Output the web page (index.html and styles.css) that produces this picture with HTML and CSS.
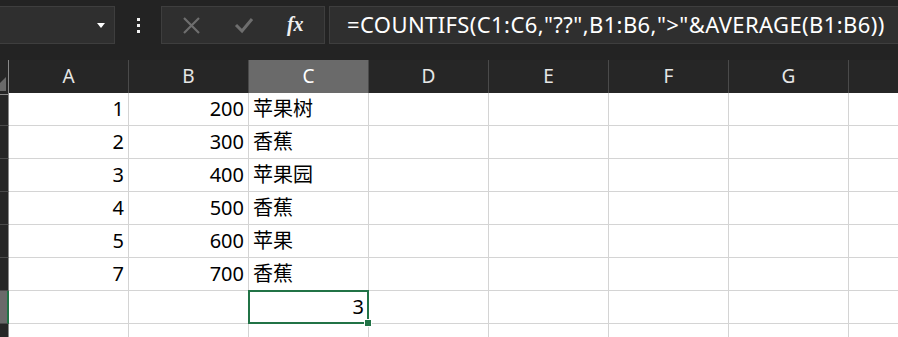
FILE: index.html
```html
<!DOCTYPE html>
<html lang="zh-CN">
<head>
  <meta charset="UTF-8">
  <title>COUNTIFS</title>
  <link rel="stylesheet" href="styles.css">
</head>
<body>
  <!-- Formula bar -->
  <div class="formulaBar">
    <div class="nameBox">
      <svg class="dropArrow" width="8" height="5" viewBox="0 0 8 5"><path d="M0 0H8L4 5Z" fill="#fff"/></svg>
    </div>
    <div class="dots"><i></i><i></i><i></i></div>
    <div class="fxBox">
      <svg class="fxIcon" width="19" height="19" viewBox="0 0 19 19"><path d="M2 2L17 17M17 2L2 17" stroke="#6e6e6e" stroke-width="2.2" fill="none"/></svg>
      <svg class="fxIcon" width="20" height="18" viewBox="0 0 20 18"><path d="M2 9L8 15L18 3" stroke="#6e6e6e" stroke-width="3" fill="none"/></svg>
      <span class="fxLabel">fx</span>
    </div>
    <div class="formulaInput">=COUNTIFS(C1:C6,"??",B1:B6,"&gt;"&amp;AVERAGE(B1:B6))</div>
  </div>

  <!-- Sheet grid -->
  <div class="sheetWrap">
    <div class="sheet">
      <div class="corner"><span class="cornerTri"></span></div>
      <div class="colHead">A</div>
      <div class="colHead">B</div>
      <div class="colHead selected">C</div>
      <div class="colHead">D</div>
      <div class="colHead">E</div>
      <div class="colHead">F</div>
      <div class="colHead">G</div>
      <div class="colHead"></div>
    </div>
    <div id="rows"></div>
  </div>

  <script>
    var data = [
      [1, 200, '苹果树'],
      [2, 300, '香蕉'],
      [3, 400, '苹果园'],
      [4, 500, '香蕉'],
      [5, 600, '苹果'],
      [7, 700, '香蕉'],
      ['', '', 3],
      ['', '', '']
    ];
    var rows = document.getElementById('rows');
    data.forEach(function(r, i) {
      var row = document.createElement('div');
      row.className = 'sheet';
      var head = document.createElement('div');
      head.className = 'rowHead' + (i === 6 ? ' selected' : '');
      row.appendChild(head);
      for (var c = 0; c < 8; c++) {
        var cell = document.createElement('div');
        cell.className = 'cell';
        var v = c < 3 ? r[c] : '';
        if (typeof v === 'number') cell.classList.add('num');
        if (i === 6 && c === 2) cell.classList.add('active');
        cell.textContent = v;
        row.appendChild(cell);
      }
      rows.appendChild(row);
    });
  </script>
</body>
</html>
```

FILE: styles.css
```css
body {
  margin: 0;
  background: #232323;
  font-family: "Noto Sans", "Noto Sans CJK SC", sans-serif;
  overflow: hidden;
  width: 898px;
  height: 337px;
}
/* Top formula bar */
.formulaBar {
  display: flex;
  align-items: stretch;
  height: 38px;
  padding: 6px 0 16px 0;
  overflow: hidden;
}
.nameBox {
  width: 116px;
  margin-left: -1px;
  background: #2f2f2f;
  border: 1px solid #3e3e3e;
  box-sizing: border-box;
  display: flex;
  align-items: center;
  justify-content: flex-end;
  padding-right: 9px;
}
.dropArrow {
  margin-top: 1px;
}
.dots {
  width: 46px;
  display: flex;
  flex-direction: column;
  align-items: center;
  justify-content: center;
  gap: 3px;
}
.dots i {
  display: block;
  width: 3px;
  height: 3px;
  background: #f2f2f2;
}
.fxBox {
  width: 164px;
  background: #2f2f2f;
  border: 1px solid #3e3e3e;
  box-sizing: border-box;
  display: flex;
  align-items: center;
  justify-content: space-around;
  padding: 0 4px 0 4px;
}
.fxLabel {
  font-family: "Liberation Serif", serif;
  font-style: italic;
  font-weight: bold;
  font-size: 20px;
  color: #f0f0f0;
  margin-top: -2px;
}
.formulaInput {
  flex: 1;
  margin-left: 4px;
  margin-right: -4px;
  background: #2f2f2f;
  border: 1px solid #3e3e3e;
  box-sizing: border-box;
  color: #ffffff;
  font-size: 22px;
  letter-spacing: 0.4px;
  line-height: 34px;
  padding-left: 17px;
  white-space: nowrap;
  overflow: hidden;
}
/* Grid */
.sheetWrap {
  width: 898px;
  height: 277px;
  overflow: hidden;
}
.sheet {
  display: grid;
  grid-template-columns: 9px repeat(8, 120px);
  height: 33px;
}
.corner {
  border-right: 1px solid #8a8a8a;
  border-bottom: 1px solid #8a8a8a;
  background: #262626;
  position: relative;
  overflow: hidden;
}
.cornerTri {
  position: absolute;
  right: 2px;
  bottom: 3px;
  width: 0;
  height: 0;
  border-left: 14px solid transparent;
  border-bottom: 14px solid #6a6a6a;
}
.colHead {
  background: #262626;
  color: #e6e6e6;
  font-size: 19px;
  text-align: center;
  line-height: 33px;
  border-right: 1px solid #4a4a4a;
  border-bottom: 1px solid #8a8a8a;
  box-sizing: border-box;
}
.colHead.selected {
  background: #6a6a6a;
  color: #ffffff;
  border-bottom: 2px solid #217346;
}
.rowHead {
  background: #262626;
  border-right: 1px solid #8a8a8a;
  border-bottom: 1px solid #4a4a4a;
}
.rowHead.selected {
  background: #6a6a6a;
  border-right: 2px solid #217346;
}
.cell {
  background: #ffffff;
  color: #000000;
  font-size: 20px;
  line-height: 32px;
  padding: 0 4px;
  border-right: 1px solid #d4d4d4;
  border-bottom: 1px solid #d4d4d4;
  box-sizing: border-box;
  white-space: nowrap;
}
.cell.num {
  text-align: right;
}
/* Active cell frame */
.cell.active {
  position: relative;
}
.cell.active::after {
  content: "";
  position: absolute;
  left: -1px;
  top: -1px;
  right: -1px;
  bottom: -1px;
  border: 2px solid #217346;
}
.cell.active::before {
  content: "";
  position: absolute;
  right: -4px;
  bottom: -4px;
  width: 6px;
  height: 6px;
  background: #217346;
  border: 1px solid #ffffff;
  z-index: 1;
}
```
